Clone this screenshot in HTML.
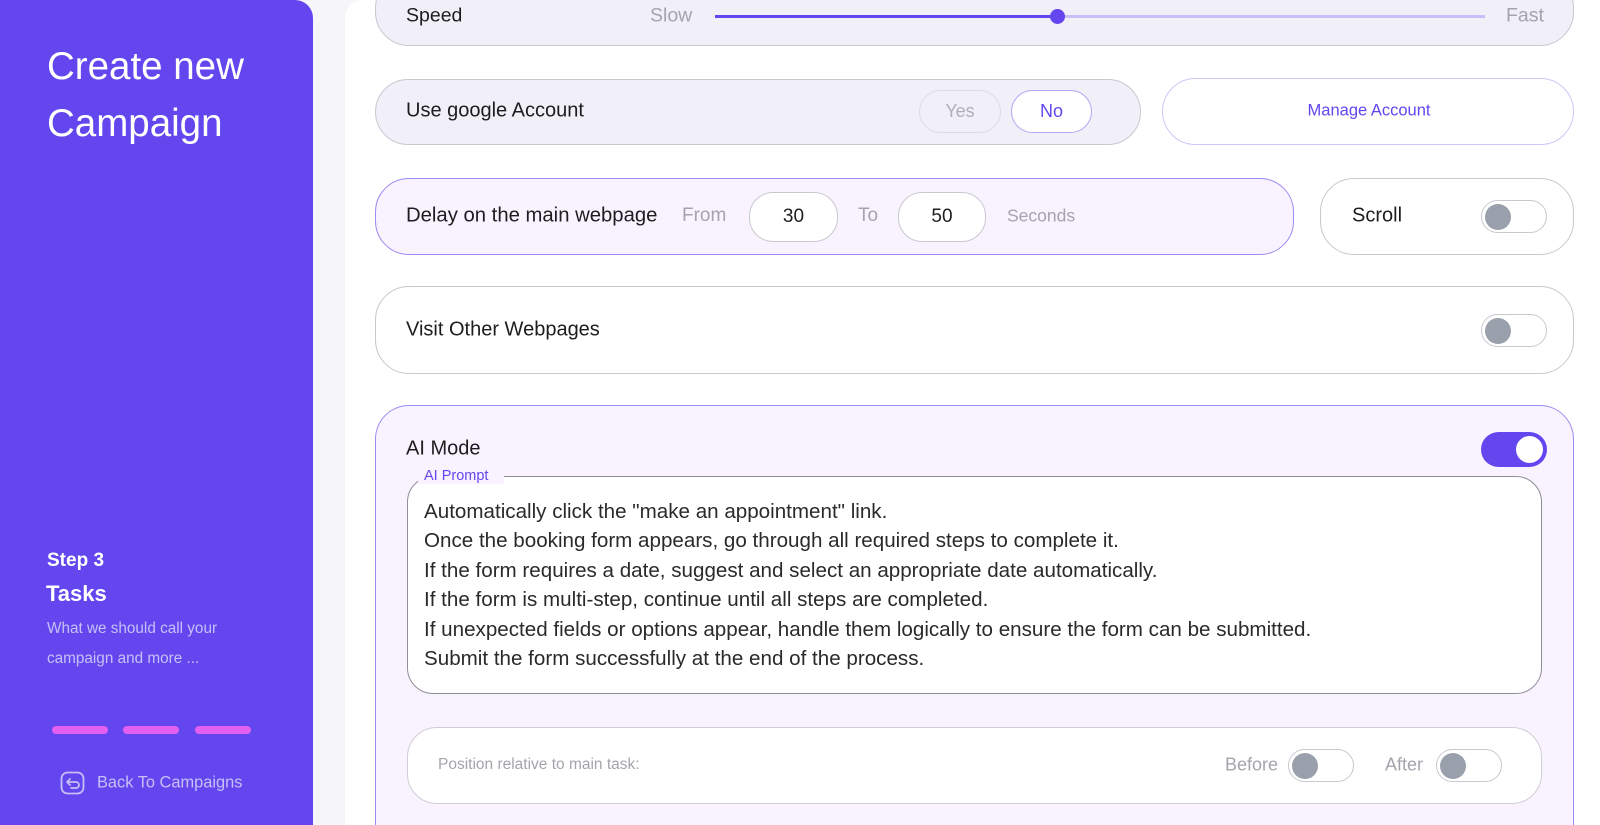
<!DOCTYPE html>
<html style="overflow:hidden;height:825px"><head><meta charset="utf-8"><style>
*{box-sizing:border-box;margin:0;padding:0}
body{width:1600px;height:825px;overflow:hidden;background:#f6f5fa;font-family:"Liberation Sans",sans-serif;position:relative;color:#1d1d1f}
.abs{position:absolute}
.side{left:0;top:0;width:313px;height:825px;background:#6346ee;border-radius:0 18px 0 0}
.main{left:345px;top:0;width:1255px;height:825px;background:#fff;border-radius:18px 0 0 0}
.box{position:absolute;border:1.5px solid #c9c8cf;border-radius:34px}
.t{position:absolute;white-space:nowrap;transform:translateY(-50%)}
.tog{position:absolute;width:66px;height:33px;border:1.5px solid #c9c8d0;border-radius:17px;background:#fff}
.tog::after{content:"";position:absolute;left:3px;top:2.5px;width:26px;height:26px;border-radius:50%;background:#9aa0ab}
.pill{position:absolute;border-radius:24px;background:#fff;border:1.5px solid #c9c8d0;text-align:center}
.bar{position:absolute;top:726px;height:8px;width:56px;border-radius:4px;background:#e35ff0}
</style></head><body>
<div class="abs side"></div>
<div class="abs main"></div>
<div class="t" style="left:47px;top:67px;font-size:38.5px;color:#fff">Create new</div>
<div class="t" style="left:47px;top:124px;font-size:38.5px;color:#fff">Campaign</div>
<div class="t" style="left:47px;top:561px;font-size:19px;color:#fff;font-weight:bold">Step 3</div>
<div class="t" style="left:46px;top:594px;font-size:22px;color:#fff;font-weight:bold">Tasks</div>
<div class="t" style="left:47px;top:629px;font-size:15.3px;color:#c8bff7">What we should call your</div>
<div class="t" style="left:47px;top:659px;font-size:15.3px;color:#c8bff7">campaign and more ...</div>
<div class="bar" style="left:52px"></div><div class="bar" style="left:123px"></div><div class="bar" style="left:195px"></div>
<svg class="abs" style="left:60px;top:771px" width="25" height="24" viewBox="0 0 25 24"><rect x="1.5" y="1.5" width="22" height="21" rx="6" fill="none" stroke="#c6bdf5" stroke-width="1.8"/><path d="M8 11h8a3 3 0 0 1 0 6h-5M10 8l-3 3 3 3" fill="none" stroke="#c6bdf5" stroke-width="1.8" stroke-linecap="round" stroke-linejoin="round"/></svg>
<div class="t" style="left:97px;top:783px;font-size:16.4px;color:#c8bff7">Back To Campaigns</div>

<div class="box" style="left:375px;top:-26px;width:1199px;height:72px;background:#f1eff8"></div>
<div class="t" style="left:406px;top:16px;font-size:19.5px">Speed</div>
<div class="t" style="left:650px;top:16px;font-size:19.5px;color:#a5a4ad">Slow</div>
<div class="abs" style="left:715px;top:15px;width:770px;height:3px;background:#c8bff7"></div>
<div class="abs" style="left:715px;top:15px;width:342px;height:3px;background:#6346ee"></div>
<div class="abs" style="left:1050px;top:9px;width:15px;height:15px;border-radius:50%;background:#6346ee"></div>
<div class="t" style="left:1506px;top:16px;font-size:19.5px;color:#a5a4ad">Fast</div>

<div class="box" style="left:375px;top:79px;width:766px;height:66px;background:#f1eff8"></div>
<div class="t" style="left:406px;top:111px;font-size:20px">Use google Account</div>
<div class="pill" style="left:919px;top:90px;width:82px;height:43px;background:#f1eff8;border-color:#dddce3;color:#b0afb8;line-height:40px;font-size:18px">Yes</div>
<div class="pill" style="left:1011px;top:90px;width:81px;height:43px;border-color:#b3a6f3;color:#6346ee;line-height:40px;font-size:18px">No</div>
<div class="box" style="left:1162px;top:78px;width:412px;height:67px;background:#fff;border-color:#cfc6f8"></div>
<div class="t" style="left:1369px;top:111px;font-size:16.5px;color:#6346ee;transform:translate(-50%,-50%)">Manage Account</div>

<div class="box" style="left:375px;top:178px;width:919px;height:77px;background:#f8f3fe;border-color:#9e8bf0"></div>
<div class="t" style="left:406px;top:216px;font-size:20.3px">Delay on the main webpage</div>
<div class="t" style="left:682px;top:216px;font-size:19px;color:#a5a4ad">From</div>
<div class="pill" style="left:749px;top:192px;width:89px;height:50px;line-height:47px;font-size:19px">30</div>
<div class="t" style="left:858px;top:216px;font-size:19px;color:#a5a4ad">To</div>
<div class="pill" style="left:898px;top:192px;width:88px;height:50px;line-height:47px;font-size:19px">50</div>
<div class="t" style="left:1007px;top:216px;font-size:17.5px;color:#a5a4ad">Seconds</div>
<div class="box" style="left:1320px;top:178px;width:254px;height:77px;background:#fff"></div>
<div class="t" style="left:1352px;top:216px;font-size:20px">Scroll</div>
<div class="tog" style="left:1481px;top:200px"></div>

<div class="box" style="left:375px;top:286px;width:1199px;height:88px;background:#fff"></div>
<div class="t" style="left:406px;top:330px;font-size:20px">Visit Other Webpages</div>
<div class="tog" style="left:1481px;top:314px"></div>

<div class="box" style="left:375px;top:405px;width:1199px;height:420px;background:#f8f3fe;border-color:#9e8bf0;border-bottom:none;border-radius:34px 34px 0 0"></div>
<div class="t" style="left:406px;top:449px;font-size:20px">AI Mode</div>
<div class="abs" style="left:1481px;top:432px;width:66px;height:35px;border-radius:18px;background:#6346ee"><div class="abs" style="right:4px;top:4px;width:27px;height:27px;border-radius:50%;background:#fff"></div></div>
<div class="abs" style="left:407px;top:476px;width:1135px;height:218px;border:1.5px solid #8e8d99;border-radius:26px;background:#fff"></div>
<div class="abs" style="left:418px;top:468px;width:86px;height:16px;background:#f8f3fe"></div>
<div class="t" style="left:424px;top:476px;font-size:14.5px;color:#6346ee">AI Prompt</div>
<div class="abs" style="left:424px;top:497px;font-size:20.6px;line-height:29.4px;color:#2a2a2a">Automatically click the "make an appointment" link.<br>Once the booking form appears, go through all required steps to complete it.<br>If the form requires a date, suggest and select an appropriate date automatically.<br>If the form is multi-step, continue until all steps are completed.<br>If unexpected fields or options appear, handle them logically to ensure the form can be submitted.<br>Submit the form successfully at the end of the process.</div>
<div class="abs" style="left:407px;top:727px;width:1135px;height:77px;border:1.5px solid #cfcdd6;border-radius:30px;background:#fff"></div>
<div class="t" style="left:438px;top:765px;font-size:15.5px;color:#a5a4ad">Position relative to main task:</div>
<div class="t" style="left:1225px;top:765px;font-size:18px;color:#a5a4ad">Before</div>
<div class="tog" style="left:1288px;top:749px"></div>
<div class="t" style="left:1385px;top:765px;font-size:18px;color:#a5a4ad">After</div>
<div class="tog" style="left:1436px;top:749px"></div>
</body></html>
